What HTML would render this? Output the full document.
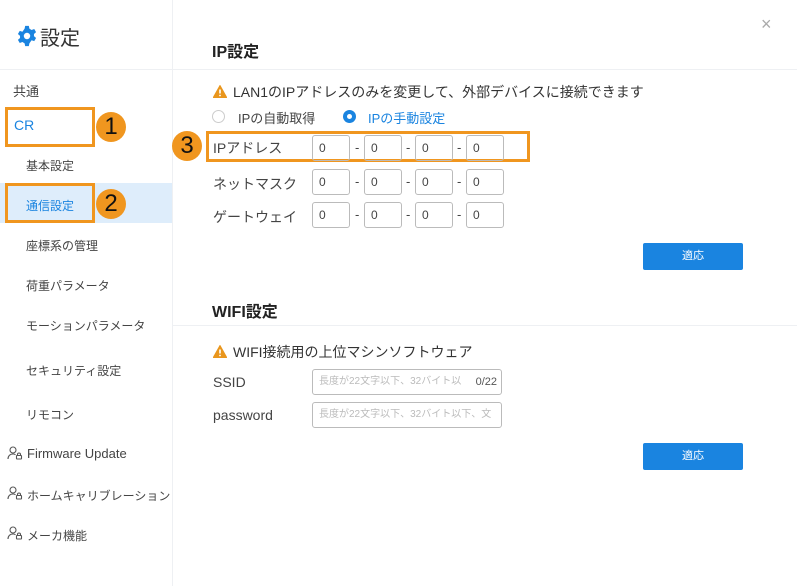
<!DOCTYPE html>
<html><head><meta charset="utf-8"><style>
*{box-sizing:border-box;margin:0;padding:0}
body{width:797px;height:586px;background:#fff;font-family:"Liberation Sans","Noto Sans CJK JP",sans-serif;color:#333;position:relative;overflow:hidden}
.a{position:absolute;white-space:nowrap}
.side{position:absolute;left:0;top:0;width:173px;height:586px;border-right:1px solid #eef0f3}
.nav{font-size:12px;color:#444}
.box{position:absolute;border:3px solid #f0961f}
.num{position:absolute;width:30px;height:30px;border-radius:50%;background:#f0961f;color:#111;font-size:24px;line-height:30px;text-align:center}
.in{position:absolute;width:38px;height:26px;border:1px solid #bbb;border-radius:3px;font-size:12px;line-height:24px;padding-left:6px;color:#444}
.dash{position:absolute;font-size:13px;color:#444}
.lbl{font-size:14px;color:#444}
.btn{position:absolute;width:100px;height:27px;background:#1a84e0;color:#fff;font-size:11px;text-align:center;line-height:27px;border-radius:2px}
.warn{display:inline-block;width:14px;height:13px;vertical-align:-1px;margin-right:6px}
.txt{position:absolute;width:190px;height:26px;border:1px solid #bbb;border-radius:3px;font-size:10px;color:#bbb;line-height:24px;padding-left:6px;overflow:hidden}
</style></head><body>
<div class="side"></div>
<div class="a" style="left:0;top:69px;width:797px;height:1px;background:#eef0f3"></div>
<svg class="a" style="left:16px;top:25px" width="22" height="22" viewBox="0 0 24 24"><path fill="#1a84e0" d="M10 1h4l.6 3 2.4 1.4 2.9-1 2 3.4-2.3 2v2.4l2.3 2-2 3.4-2.9-1L14.6 20 14 23h-4l-.6-3L7 18.6l-2.9 1-2-3.4 2.3-2v-2.4l-2.3-2 2-3.4 2.9 1L9.4 4z"/><circle cx="12" cy="12" r="3.5" fill="#fff"/></svg>
<div class="a" style="left:40px;top:22px;font-size:20px;color:#333">設定</div>
<div class="a nav" style="left:13px;top:81px;font-size:13px">共通</div>
<div class="a" style="left:14px;top:117px;font-size:14px;color:#1a84e0">CR</div>
<div class="box" style="left:5px;top:107px;width:90px;height:40px"></div>
<div class="num" style="left:96px;top:112px">1</div>
<div class="a nav" style="left:26px;top:157px">基本設定</div>
<div class="a" style="left:0;top:183px;width:172px;height:40px;background:#deedfb"></div>
<div class="a nav" style="left:26px;top:197px;color:#1a84e0">通信設定</div>
<div class="box" style="left:5px;top:183px;width:90px;height:40px"></div>
<div class="num" style="left:96px;top:189px">2</div>
<div class="a nav" style="left:26px;top:237px">座標系の管理</div>
<div class="a nav" style="left:26px;top:277px">荷重パラメータ</div>
<div class="a nav" style="left:26px;top:317px">モーションパラメータ</div>
<div class="a nav" style="left:26px;top:362px">セキュリティ設定</div>
<div class="a nav" style="left:26px;top:406px">リモコン</div>
<svg class="a" style="left:7px;top:446px" width="16" height="14" viewBox="0 0 16 14"><g fill="none" stroke="#555" stroke-width="1.1"><circle cx="6" cy="4" r="3"/><path d="M1 13c0-3 2-5 5-5 1 0 2 .3 2.5.8"/><rect x="9.5" y="9.5" width="5" height="3.5" rx=".5"/><path d="M10.5 9.5v-1a1.5 1.5 0 0 1 3 0v1"/></g></svg>
<div class="a nav" style="left:27px;top:446px;font-size:13px">Firmware Update</div>
<svg class="a" style="left:7px;top:486px" width="16" height="14" viewBox="0 0 16 14"><g fill="none" stroke="#555" stroke-width="1.1"><circle cx="6" cy="4" r="3"/><path d="M1 13c0-3 2-5 5-5 1 0 2 .3 2.5.8"/><rect x="9.5" y="9.5" width="5" height="3.5" rx=".5"/><path d="M10.5 9.5v-1a1.5 1.5 0 0 1 3 0v1"/></g></svg>
<div class="a nav" style="left:27px;top:487px">ホームキャリブレーション</div>
<svg class="a" style="left:7px;top:526px" width="16" height="14" viewBox="0 0 16 14"><g fill="none" stroke="#555" stroke-width="1.1"><circle cx="6" cy="4" r="3"/><path d="M1 13c0-3 2-5 5-5 1 0 2 .3 2.5.8"/><rect x="9.5" y="9.5" width="5" height="3.5" rx=".5"/><path d="M10.5 9.5v-1a1.5 1.5 0 0 1 3 0v1"/></g></svg>
<div class="a nav" style="left:27px;top:527px">メーカ機能</div>

<div class="a" style="left:761px;top:14px;font-size:18px;color:#aaa">×</div>
<div class="a" style="left:212px;top:38px;font-size:16px;font-weight:bold;color:#222">IP設定</div>
<div class="a lbl" style="left:213px;top:82px;color:#333"><svg class="warn" viewBox="0 0 14 13"><path d="M7 .5 13.7 12.5H.3z" fill="#e9961d" stroke="#e9961d" stroke-linejoin="round"/><path d="M7 4.5v4" stroke="#fff" stroke-width="1.6"/><circle cx="7" cy="10.5" r=".9" fill="#fff"/></svg>LAN1のIPアドレスのみを変更して、外部デバイスに接続できます</div>
<div class="a" style="left:212px;top:110px;width:13px;height:13px;border:1px solid #ccc;border-radius:50%"></div>
<div class="a lbl" style="left:238px;top:108px;font-size:13px">IPの自動取得</div>
<div class="a" style="left:343px;top:110px;width:13px;height:13px;background:#1a84e0;border-radius:50%"><div style="position:absolute;left:4px;top:4px;width:5px;height:5px;border-radius:50%;background:#fff"></div></div>
<div class="a" style="left:368px;top:108px;font-size:13px;color:#1a84e0">IPの手動設定</div>
<div class="box" style="left:206px;top:131px;width:324px;height:31px"></div>
<div class="num" style="left:172px;top:131px">3</div>
<div class="a lbl" style="left:213px;top:138px">IPアドレス</div>
<div class="a lbl" style="left:213px;top:174px">ネットマスク</div>
<div class="a lbl" style="left:213px;top:207px">ゲートウェイ</div>

<div class="in" style="left:312px;top:135px">0</div><div class="dash" style="left:355px;top:140px">-</div>
<div class="in" style="left:364px;top:135px">0</div><div class="dash" style="left:406px;top:140px">-</div>
<div class="in" style="left:415px;top:135px">0</div><div class="dash" style="left:457px;top:140px">-</div>
<div class="in" style="left:466px;top:135px">0</div>
<div class="in" style="left:312px;top:169px">0</div><div class="dash" style="left:355px;top:174px">-</div>
<div class="in" style="left:364px;top:169px">0</div><div class="dash" style="left:406px;top:174px">-</div>
<div class="in" style="left:415px;top:169px">0</div><div class="dash" style="left:457px;top:174px">-</div>
<div class="in" style="left:466px;top:169px">0</div>
<div class="in" style="left:312px;top:202px">0</div><div class="dash" style="left:355px;top:207px">-</div>
<div class="in" style="left:364px;top:202px">0</div><div class="dash" style="left:406px;top:207px">-</div>
<div class="in" style="left:415px;top:202px">0</div><div class="dash" style="left:457px;top:207px">-</div>
<div class="in" style="left:466px;top:202px">0</div>
<div class="btn" style="left:643px;top:243px">適応</div>

<div class="a" style="left:212px;top:298px;font-size:16px;font-weight:bold;color:#222">WIFI設定</div>
<div class="a" style="left:173px;top:325px;width:624px;height:1px;background:#eef0f3"></div>
<div class="a lbl" style="left:213px;top:342px;color:#333"><svg class="warn" viewBox="0 0 14 13"><path d="M7 .5 13.7 12.5H.3z" fill="#e9961d" stroke="#e9961d" stroke-linejoin="round"/><path d="M7 4.5v4" stroke="#fff" stroke-width="1.6"/><circle cx="7" cy="10.5" r=".9" fill="#fff"/></svg>WIFI接続用の上位マシンソフトウェア</div>
<div class="a lbl" style="left:213px;top:374px">SSID</div>
<div class="a lbl" style="left:213px;top:407px">password</div>
<div class="txt" style="left:312px;top:369px">長度が22文字以下、32バイト以<span style="position:absolute;right:4px;color:#555;font-size:11px">0/22</span></div>
<div class="txt" style="left:312px;top:402px">長度が22文字以下、32バイト以下、文字</div>
<div class="btn" style="left:643px;top:443px">適応</div>
</body></html>
